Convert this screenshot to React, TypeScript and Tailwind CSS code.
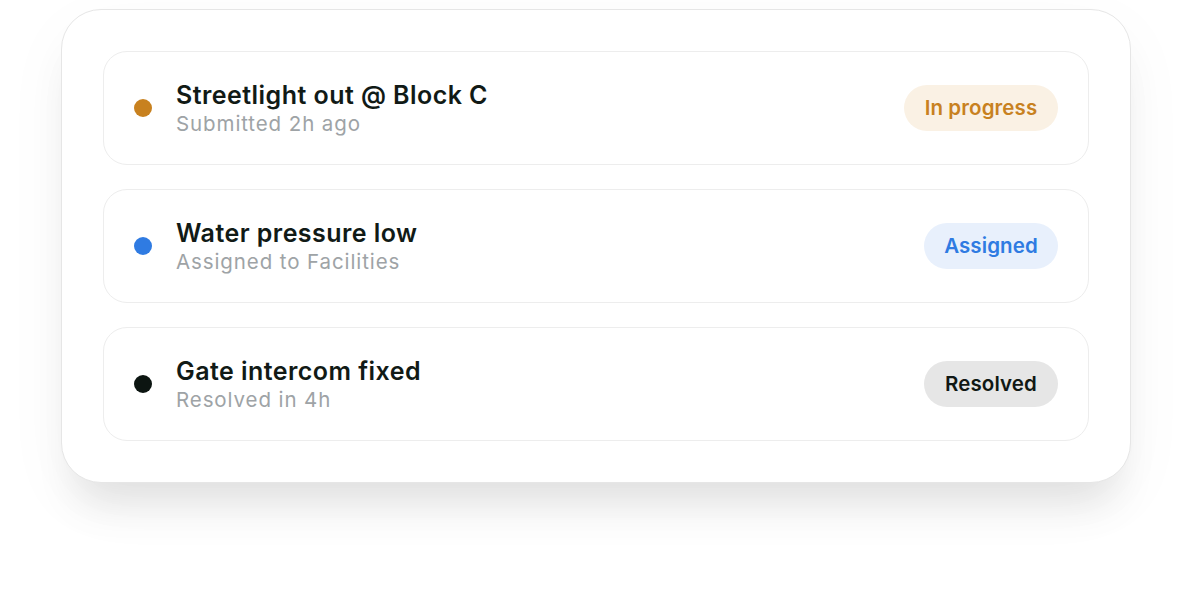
import React from "react";

const items = [
  {
    title: "Streetlight out @ Block C",
    sub: "Submitted 2h ago",
    dot: "bg-[#c8811f]",
    badge: "In progress",
    badgeCls: "bg-[#faf1e4] text-[#c8811f] w-[154px]",
  },
  {
    title: "Water pressure low",
    sub: "Assigned to Facilities",
    dot: "bg-[#2f7be2]",
    badge: "Assigned",
    badgeCls: "bg-[#e8f0fc] text-[#2f7be2] w-[134px]",
  },
  {
    title: "Gate intercom fixed",
    sub: "Resolved in 4h",
    dot: "bg-[#0c1511]",
    badge: "Resolved",
    badgeCls: "bg-[#e6e6e6] text-[#111814] w-[134px]",
  },
];

export default function App() {
  return (
    <div
      className="w-[1192px] h-[596px] bg-white flex justify-center pt-[9px]"
      style={{ fontFamily: "Inter, 'Noto Sans', sans-serif" }}
    >
      <div className="w-[1070px] h-[474px] rounded-[40px] border border-[#e6e6e6] bg-white p-[41px] flex flex-col gap-[24px] shadow-[0_34px_40px_-14px_rgba(0,0,0,0.1),0_20px_70px_rgba(0,0,0,0.035)]">
        {items.map((it) => (
          <div
            key={it.title}
            className="h-[114px] rounded-[24px] border border-[#ededed] px-[30px] flex items-center"
          >
            <div className={`w-[18px] h-[18px] rounded-full ${it.dot}`} />
            <div className="ml-[24px] flex flex-col flex-1">
              <div className="text-[25px] leading-[32px] font-semibold text-[#111a16] tracking-[0.45px]">
                {it.title}
              </div>
              <div className="text-[20.5px] leading-[26px] text-[#9ea3a6] tracking-[0.9px]">
                {it.sub}
              </div>
            </div>
            <div
              className={`h-[46px] rounded-full flex items-center justify-center text-[20.5px] font-semibold tracking-[0.1px] ${it.badgeCls}`}
            >
              {it.badge}
            </div>
          </div>
        ))}
      </div>
    </div>
  );
}
